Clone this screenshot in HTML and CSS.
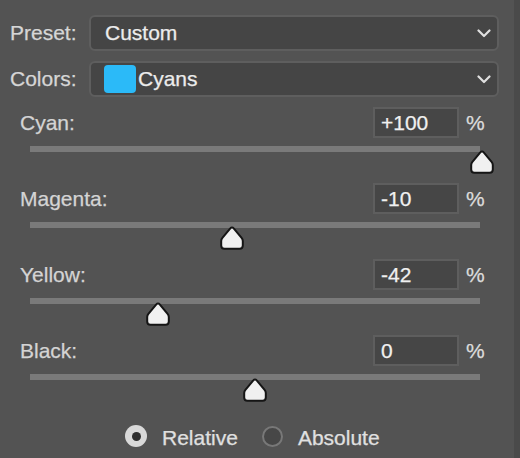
FILE: index.html
```html
<!DOCTYPE html>
<html>
<head>
<meta charset="utf-8">
<link rel="stylesheet" href="styles.css">
</head>
<body>
<div class="window">
  <div class="panel">
    <div class="field-row">
      <span class="field-label">Preset:</span>
      <div class="select">
        <span class="select-text">Custom</span>
        <svg class="chevron" width="14" height="9" viewBox="0 0 14 9"><path d="M1.5 1.5 L7 7 L12.5 1.5" fill="none" stroke="#e0e0e0" stroke-width="2.2" stroke-linecap="round" stroke-linejoin="round"/></svg>
      </div>
    </div>
    <div class="field-row">
      <span class="field-label">Colors:</span>
      <div class="select select-color">
        <span class="swatch"></span>
        <span class="select-text">Cyans</span>
        <svg class="chevron" width="14" height="9" viewBox="0 0 14 9"><path d="M1.5 1.5 L7 7 L12.5 1.5" fill="none" stroke="#e0e0e0" stroke-width="2.2" stroke-linecap="round" stroke-linejoin="round"/></svg>
      </div>
    </div>

    <div class="slider-row">
      <div class="slider-head">
        <span class="slider-label">Cyan:</span>
        <div class="num-input">+100</div>
        <span class="pct">%</span>
      </div>
      <div class="track">
        <svg class="thumb" style="left:440px" width="24" height="24" viewBox="0 0 24 24"><path d="M12 1.4 Q12.9 1.4 13.5 2.2 L21.6 11.8 Q22.8 13.2 22.8 15 V19.6 Q22.8 22.8 19.6 22.8 H4.4 Q1.2 22.8 1.2 19.6 V15 Q1.2 13.2 2.4 11.8 L10.5 2.2 Q11.1 1.4 12 1.4 Z" fill="#f0f0f0" stroke="#151515" stroke-width="2"/></svg>
      </div>
    </div>

    <div class="slider-row">
      <div class="slider-head">
        <span class="slider-label">Magenta:</span>
        <div class="num-input">-10</div>
        <span class="pct">%</span>
      </div>
      <div class="track">
        <svg class="thumb" style="left:190px" width="24" height="24" viewBox="0 0 24 24"><path d="M12 1.4 Q12.9 1.4 13.5 2.2 L21.6 11.8 Q22.8 13.2 22.8 15 V19.6 Q22.8 22.8 19.6 22.8 H4.4 Q1.2 22.8 1.2 19.6 V15 Q1.2 13.2 2.4 11.8 L10.5 2.2 Q11.1 1.4 12 1.4 Z" fill="#f0f0f0" stroke="#151515" stroke-width="2"/></svg>
      </div>
    </div>

    <div class="slider-row">
      <div class="slider-head">
        <span class="slider-label">Yellow:</span>
        <div class="num-input">-42</div>
        <span class="pct">%</span>
      </div>
      <div class="track">
        <svg class="thumb" style="left:116px" width="24" height="24" viewBox="0 0 24 24"><path d="M12 1.4 Q12.9 1.4 13.5 2.2 L21.6 11.8 Q22.8 13.2 22.8 15 V19.6 Q22.8 22.8 19.6 22.8 H4.4 Q1.2 22.8 1.2 19.6 V15 Q1.2 13.2 2.4 11.8 L10.5 2.2 Q11.1 1.4 12 1.4 Z" fill="#f0f0f0" stroke="#151515" stroke-width="2"/></svg>
      </div>
    </div>

    <div class="slider-row">
      <div class="slider-head">
        <span class="slider-label">Black:</span>
        <div class="num-input">0</div>
        <span class="pct">%</span>
      </div>
      <div class="track">
        <svg class="thumb" style="left:213px" width="24" height="24" viewBox="0 0 24 24"><path d="M12 1.4 Q12.9 1.4 13.5 2.2 L21.6 11.8 Q22.8 13.2 22.8 15 V19.6 Q22.8 22.8 19.6 22.8 H4.4 Q1.2 22.8 1.2 19.6 V15 Q1.2 13.2 2.4 11.8 L10.5 2.2 Q11.1 1.4 12 1.4 Z" fill="#f0f0f0" stroke="#151515" stroke-width="2"/></svg>
      </div>
    </div>

    <div class="radio-row">
      <span class="radio radio-on"><span class="radio-dot"></span></span>
      <span class="radio-text">Relative</span>
      <span class="radio radio-off"></span>
      <span class="radio-text">Absolute</span>
    </div>
  </div>
  <div class="edge"></div>
</div>
</body>
</html>
```

FILE: styles.css
```css
html, body {
  margin: 0;
  padding: 0;
  background: #535353;
}
body {
  font-family: "Liberation Sans", Arial, sans-serif;
  font-size: 21px;
  color: #d8d8d8;
  -webkit-text-stroke: 0.25px currentColor;
}
.window {
  display: flex;
  width: 520px;
  height: 458px;
  overflow: hidden;
}
.panel {
  width: 514px;
  padding-top: 15px;
  box-sizing: border-box;
  display: flex;
  flex-direction: column;
}
.edge {
  width: 6px;
  background: #4a4a4a;
}
.field-row {
  display: flex;
  align-items: center;
  height: 36px;
  margin-bottom: 10px;
  padding-left: 10px;
}
.field-label {
  width: 79px;
  color: #d6d6d6;
}
.select {
  width: 410px;
  height: 36px;
  box-sizing: border-box;
  border: 2px solid #5e5e5e;
  border-radius: 6px;
  background: #454545;
  display: flex;
  align-items: center;
  padding-left: 14px;
  padding-right: 6px;
  color: #ececec;
}
.select-color {
  padding-left: 13px;
}
.select-text {
  flex: 1;
}
.swatch {
  width: 32px;
  height: 28px;
  border-radius: 4px;
  background: #2bbaf8;
  margin-right: 2px;
}
.chevron {
  display: block;
}
.slider-row {
  padding-bottom: 31px;
}
.slider-head {
  display: flex;
  align-items: center;
  height: 31px;
  padding-left: 20px;
}
.slider-label {
  flex: 1;
  color: #d4d4d4;
}
.num-input {
  width: 86px;
  height: 31px;
  box-sizing: border-box;
  border: 2px solid #5e5e5e;
  background: #464646;
  color: #f0f0f0;
  padding-left: 6px;
  line-height: 27px;
}
.pct {
  width: 55px;
  padding-left: 7px;
  box-sizing: border-box;
  color: #dcdcdc;
}
.track {
  position: relative;
  margin-top: 8px;
  margin-left: 30px;
  width: 450px;
  height: 6px;
  background: #7a7a7a;
}
.thumb {
  position: absolute;
  top: 4px;
  display: block;
}
.radio-row {
  display: flex;
  align-items: center;
  margin-top: 14px;
  height: 22px;
  padding-left: 125px;
}
.radio {
  width: 22px;
  height: 22px;
  border-radius: 50%;
  box-sizing: border-box;
  display: flex;
  align-items: center;
  justify-content: center;
}
.radio-on {
  background: #d9d9d9;
}
.radio-dot {
  width: 9px;
  height: 9px;
  border-radius: 50%;
  background: #2e2e2e;
}
.radio-off {
  margin-left: 24px;
  width: 21px;
  height: 21px;
  background: #474747;
  border: 2px solid #787878;
}
.radio-text {
  margin-left: 15px;
  color: #e0e0e0;
  position: relative;
  top: 2px;
}
```
